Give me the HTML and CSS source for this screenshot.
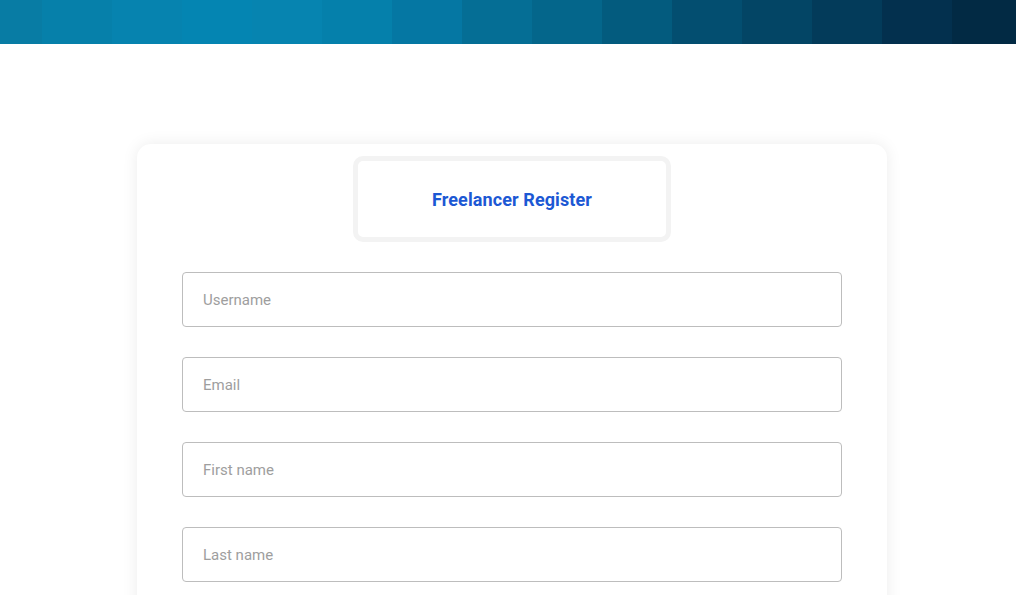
FILE: index.html
```html
<!DOCTYPE html>
<html lang="en">
<head>
<meta charset="utf-8">
<title>Freelancer Register</title>
<link rel="stylesheet" href="styles.css">
</head>
<body>
<header class="banner">
  <div class="tile t1"></div>
  <div class="tile t2"></div>
  <div class="tile t3"></div>
  <div class="tile t4"></div>
  <div class="tile t5"></div>
  <div class="tile t6"></div>
  <div class="tile t7"></div>
  <div class="tile t8"></div>
  <div class="tile t9"></div>
  <div class="tile t10"></div>
  <div class="tile t11"></div>
  <div class="tile t12"></div>
  <div class="tile t13"></div>
  <div class="tile t14"></div>
  <div class="tile t15"></div>
</header>
<main class="page">
  <section class="card">
    <div class="title-box">
      <h1 class="title">Freelancer Register</h1>
    </div>
    <form class="form">
      <input class="field" type="text" placeholder="Username">
      <input class="field" type="email" placeholder="Email">
      <input class="field" type="text" placeholder="First name">
      <input class="field" type="text" placeholder="Last name">
    </form>
  </section>
</main>
</body>
</html>
```
FILE: styles.css
```css
* { box-sizing: border-box; }
html, body { margin: 0; padding: 0; background: #ffffff; }
body { font-family: Roboto, "Liberation Sans", sans-serif; overflow: hidden; }

.banner {
  height: 44px;
  display: flex;
  margin-left: -28px;
  overflow: hidden;
}
.tile { flex: 0 0 70px; height: 44px; }
.t1 { background: #087ca4; }
.t2 { background: #0680aa; }
.t3 { background: #0683af; }
.t4 { background: #0485b2; }
.t5 { background: #0684b0; }
.t6 { background: #0580ab; }
.t7 { background: #0577a3; }
.t8 { background: #056e95; }
.t9 { background: #04668b; }
.t10 { background: #035b7e; }
.t11 { background: #034e70; }
.t12 { background: #034565; }
.t13 { background: #033b5a; }
.t14 { background: #03304e; }
.t15 { background: #022a44; }

.page {
  display: flex;
  justify-content: center;
  padding-top: 100px;
  padding-left: 8px;
}
.card {
  width: 750px;
  background: #ffffff;
  border-radius: 14px;
  box-shadow: 0 0 16px rgba(0, 0, 0, 0.08);
  padding: 12px 45px 40px;
  display: flex;
  flex-direction: column;
  align-items: center;
}
.title-box {
  width: 318px;
  height: 86px;
  border: 5px solid #f3f3f3;
  border-radius: 10px;
  display: flex;
  align-items: center;
  justify-content: center;
}
.title {
  margin: 0;
  font-family: Roboto, "Liberation Sans", sans-serif;
  font-weight: 700;
  font-size: 18px;
  color: #1c58d4;
  letter-spacing: 0.1px;
  line-height: 1;
  padding-top: 2px;
}
.form {
  width: 100%;
  margin-top: 30px;
  display: flex;
  flex-direction: column;
  gap: 30px;
}
.field {
  width: 100%;
  height: 55px;
  border: 1px solid #bdbdbd;
  border-radius: 4px;
  padding: 0 20px;
  font-family: Roboto, "Liberation Sans", sans-serif;
  font-size: 15px;
  color: #333;
  background: #fff;
  outline: none;
}
.field::placeholder { color: #9e9e9e; }
```
